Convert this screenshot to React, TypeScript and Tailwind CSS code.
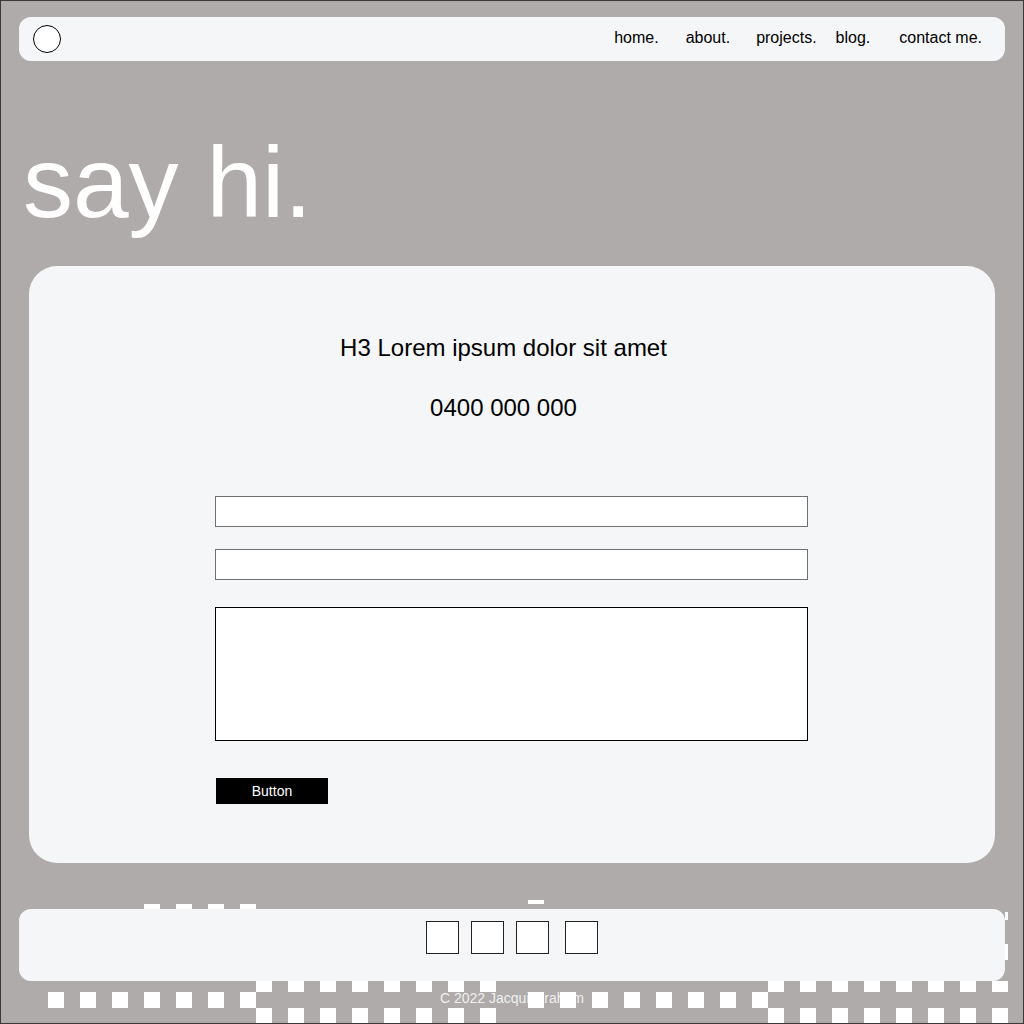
import React from 'react';

const navLinks = [
  { label: 'home.', ml: 'ml-0' },
  { label: 'about.', ml: 'ml-[27px]' },
  { label: 'projects.', ml: 'ml-[26px]' },
  { label: 'blog.', ml: 'ml-[19px]' },
  { label: 'contact me.', ml: 'ml-[29px]' },
];

// visible pieces of the checker pattern (page coordinates)
const checker: [number, number, number, number][] = [];
[144, 176, 208, 240].forEach((x) => checker.push([x, 904, 16, 5]));
checker.push([528, 900, 16, 4]);
checker.push([1005, 912, 3, 8]);
checker.push([1005, 944, 3, 16]);
for (let x = 48; x < 256; x += 32) checker.push([x, 992, 16, 16]);
for (let x = 256; x < 512; x += 32) {
  checker.push([x, 981, 16, 11]);
  checker.push([x, 1008, 16, 15]);
}
for (let x = 528; x < 768; x += 32) checker.push([x, 992, 16, 16]);
for (let x = 768; x < 1008; x += 32) {
  checker.push([x, 981, 16, 11]);
  checker.push([x, 1008, 16, 15]);
}

export default function App() {
  return (
    <div className="relative w-[1024px] h-[1024px] overflow-hidden border border-[#3a3a3a] bg-[#afabaa] font-['Liberation_Sans',Arial,sans-serif]">
      {/* nav */}
      <nav className="mt-[16px] ml-[18px] w-[986px] h-[44px] rounded-[12px] bg-[#f5f6f8] flex items-center justify-between pl-[14px] pr-[23px]">
        <div className="w-[28px] h-[28px] rounded-full border border-black bg-white" />
        <ul className="flex items-center text-[16px] leading-[24px] text-black -mt-[2px]">
          {navLinks.map((l) => (
            <li key={l.label} className={l.ml}>
              {l.label}
            </li>
          ))}
        </ul>
      </nav>

      <h1 className="mt-[71px] ml-[22px] text-[100px] leading-[100px] text-white">say hi.</h1>

      {/* contact card */}
      <section className="mt-[34px] ml-[28px] w-[966px] h-[597px] rounded-[28px] bg-[#f5f6f8] pt-[68px]">
        <div className="pr-[17px] text-center text-[24px] leading-[28px] text-black">
          <h3>H3 Lorem ipsum dolor sit amet</h3>
          <p className="mt-[32px]">0400 000 000</p>
        </div>

        <form className="mt-[74px] ml-[186px] w-[593px] flex flex-col">
          <input className="h-[31px] border border-[#707070] bg-white" />
          <input className="mt-[22px] h-[31px] border border-[#707070] bg-white" />
          <textarea className="mt-[27px] h-[134px] border border-black bg-white resize-none" />
          <button
            type="button"
            className="mt-[37px] ml-[1px] w-[112px] h-[26px] bg-black text-white text-[14px] leading-[26px]"
          >
            Button
          </button>
        </form>
      </section>

      {/* footer */}
      <footer className="mt-[46px] ml-[18px] w-[986px] h-[72px] rounded-[12px] bg-[#f5f6f8] pt-[12px] flex justify-center">
        <div className="flex">
          <div className="w-[33px] h-[33px] border border-[#222] bg-white" />
          <div className="ml-[12px] w-[33px] h-[33px] border border-[#222] bg-white" />
          <div className="ml-[12px] w-[33px] h-[33px] border border-[#222] bg-white" />
          <div className="ml-[16px] w-[33px] h-[33px] border border-[#222] bg-white" />
        </div>
      </footer>
      <p className="mt-[9px] text-center text-[14px] leading-[16px] text-[#f0f0f0]">C 2022 Jacqui Graham</p>

      <svg
        className="absolute left-[-1px] top-[-1px] pointer-events-none"
        width="1024"
        height="1024"
        viewBox="0 0 1024 1024"
      >
        {checker.map(([x, y, w, h], i) => (
          <rect key={i} x={x} y={y} width={w} height={h} fill="#ffffff" />
        ))}
      </svg>
    </div>
  );
}
